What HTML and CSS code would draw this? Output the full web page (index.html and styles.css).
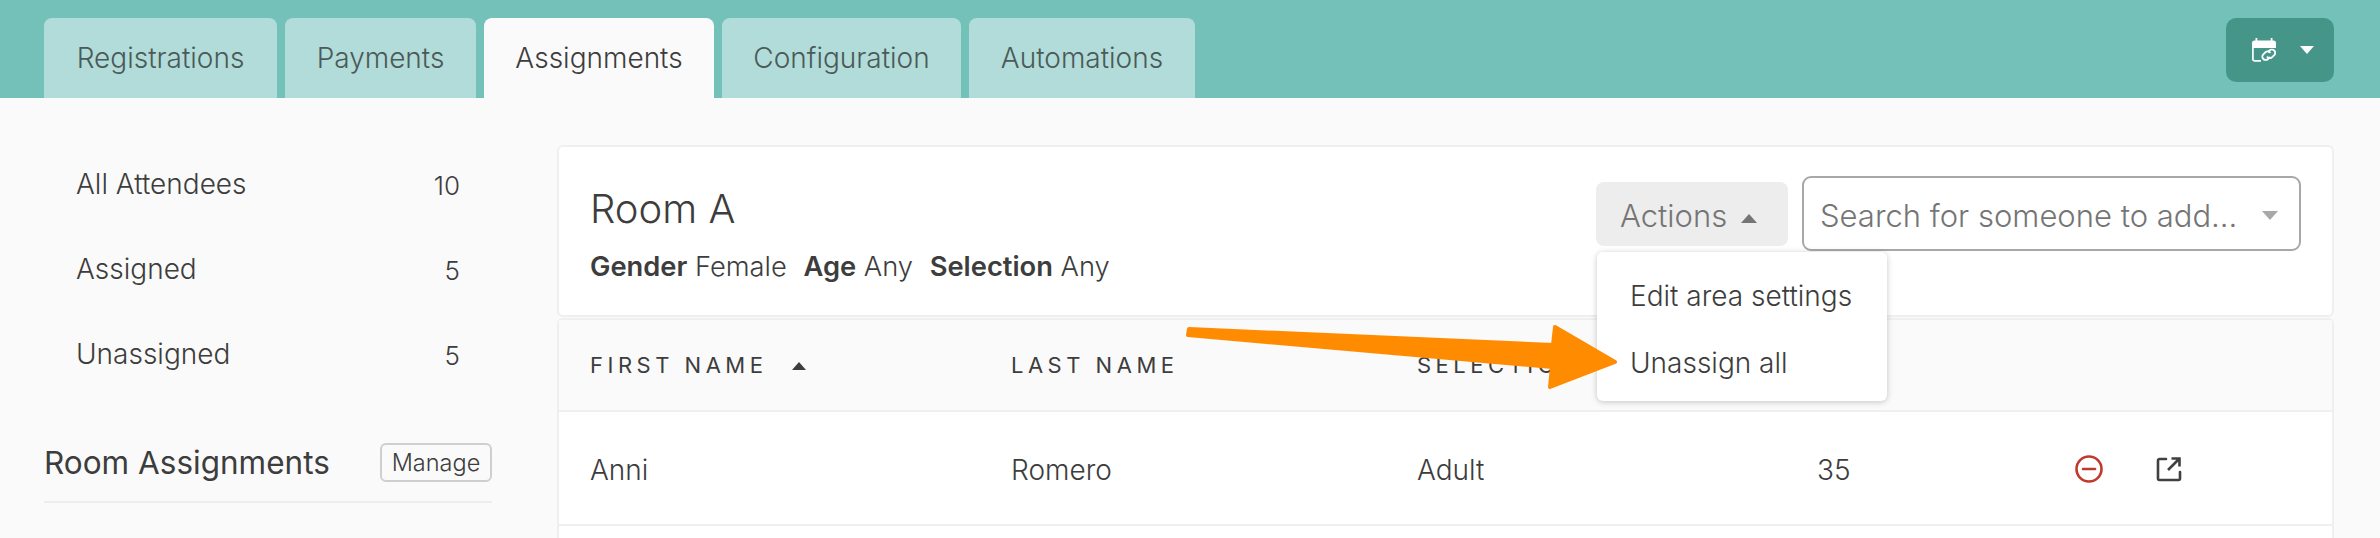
FILE: index.html
```html
<!DOCTYPE html>
<html lang="en">
<head>
<meta charset="utf-8">
<title>Assignments</title>
<link rel="stylesheet" href="styles.css">
</head>
<body>
<header class="topbar">
  <nav class="tabs">
    <a class="tab">Registrations</a>
    <a class="tab">Payments</a>
    <a class="tab tab-active">Assignments</a>
    <a class="tab">Configuration</a>
    <a class="tab">Automations</a>
  </nav>
  <button class="cal-btn">
    <svg class="cal-icon" viewBox="0 0 24 25" width="24" height="25">
      <path fill="#fff" d="M3.500 0h1.800v2.500h13.400V0h1.800v2.500h1A2.500 2.500 0 0 1 24 5v5H0V5a2.500 2.500 0 0 1 2.500-2.500h1z"/>
      <path fill="none" stroke="#fff" stroke-width="1.700" d="M.9 9v12.200c0 .9.7 1.600 1.600 1.600H9"/>
      <g fill="none" stroke="#fff" stroke-width="1.800" stroke-linecap="round">
        <path d="M16.500 13.500l1-1a3.300 3.300 0 0 1 4.700 4.700l-2 2a3.300 3.300 0 0 1-4.700 0"/>
        <path d="M17.500 19.500l-1.500 1.500a3.300 3.300 0 0 1-4.700-4.700l2-2a3.300 3.300 0 0 1 4.700 0"/>
      </g>
    </svg>
    <span class="caret caret-down caret-white"></span>
  </button>
</header>
<div class="content">
  <aside class="sidebar">
    <ul class="nav">
      <li class="nav-row"><span>All Attendees</span><span class="count">10</span></li>
      <li class="nav-row"><span>Assigned</span><span class="count">5</span></li>
      <li class="nav-row"><span>Unassigned</span><span class="count">5</span></li>
    </ul>
    <div class="side-head">
      <h2 class="side-title">Room Assignments</h2>
      <button class="manage">Manage</button>
    </div>
  </aside>
  <main class="panel">
    <section class="card room">
      <div class="room-info">
        <h1 class="room-title">Room A</h1>
        <p class="room-meta"><b>Gender</b> Female <b class="meta-gap">Age</b> Any <b class="meta-gap">Selection</b> Any</p>
      </div>
      <div class="room-tools">
        <div class="actions-wrap">
          <button class="actions">Actions <span class="caret caret-up caret-grey"></span></button>
          <div class="menu">
            <div class="menu-item">Edit area settings</div>
            <div class="menu-item">Unassign all</div>
          </div>
        </div>
        <div class="search">
          <span class="search-text">Search for someone to add...</span>
          <span class="caret caret-down caret-light"></span>
        </div>
      </div>
    </section>
    <section class="card table">
      <div class="grid thead">
        <span>First Name <span class="caret caret-up caret-dark sort"></span></span>
        <span>Last Name</span>
        <span>Selection</span>
        <span>Age</span>
        <span></span>
      </div>
      <div class="grid trow">
        <span>Anni</span>
        <span>Romero</span>
        <span>Adult</span>
        <span>35</span>
        <span class="row-icons">
          <svg viewBox="0 0 28 28" width="28" height="28"><circle cx="14" cy="14" r="12.500" fill="none" stroke="#c0392b" stroke-width="2.600"/><path d="M8 14h12" stroke="#c0392b" stroke-width="2.600" stroke-linecap="round"/></svg>
          <svg viewBox="0 0 26 26" width="26" height="26"><path d="M10 3H3.500A1.500 1.500 0 0 0 2 4.500v18A1.500 1.500 0 0 0 3.500 24h19a1.500 1.500 0 0 0 1.500-1.500V16" fill="none" stroke="#404040" stroke-width="2.600" stroke-linecap="round"/><path d="M12 14L23 3M15.500 2.500h8v8" fill="none" stroke="#404040" stroke-width="2.600"/></svg>
        </span>
      </div>
      <div class="trow-next"></div>
    </section>
  </main>
</div>
<svg class="arrow" viewBox="0 0 2380 538" width="2380" height="538">
  <path class="arrow-shape" d="M1189 329L1553 345L1555 327L1615 362L1550 387L1552 367L1188 335Z"/>
</svg>
</body>
</html>
```
FILE: styles.css
```css
* { box-sizing: border-box; }
html, body { margin: 0; padding: 0; }
body {
  width: 2380px;
  height: 538px;
  overflow: hidden;
  position: relative;
  background: #fafafa;
  color: #3d3d3d;
  font-family: Inter, "Liberation Sans", sans-serif;
  font-weight: 300;
}
.topbar {
  height: 98px;
  background: #74c1ba;
  padding: 18px 46px 0 44px;
  display: flex;
  justify-content: space-between;
  align-items: flex-start;
}
.tabs { display: flex; gap: 8px; }
.tab {
  height: 80px;
  display: flex;
  align-items: center;
  justify-content: center;
  background: #b2dcd9;
  border-radius: 8px 8px 0 0;
  font-size: 28px;
  color: #4b5a58;
}
.tab:nth-child(1) { width: 233px; }
.tab:nth-child(2) { width: 191px; }
.tab:nth-child(3) { width: 230px; }
.tab:nth-child(4) { width: 239px; }
.tab:nth-child(5) { width: 226px; }
.tab-active { background: #fafafa; color: #3d3d3d; }
.cal-btn {
  width: 108px;
  height: 64px;
  border: 0;
  border-radius: 10px;
  background: #469589;
  display: flex;
  align-items: center;
  padding: 0 0 0 26px;
}
.cal-icon { display: block; }
.caret { display: inline-block; width: 0; height: 0; border-left: 7px solid transparent; border-right: 7px solid transparent; }
.caret-down { border-top: 8px solid #fff; }
.caret-up { border-bottom: 8px solid #fff; }
.caret-white { margin-left: 24px; border-left-width: 7.500px; border-right-width: 7.500px; }
.caret-grey { border-bottom-color: #757575; border-left-width: 8.500px; border-right-width: 8.500px; border-bottom-width: 9px; margin-left: 5px; vertical-align: 4px; }
.caret-light { border-top-color: #a8a8a8; border-left-width: 8.500px; border-right-width: 8.500px; border-top-width: 9px; }
.caret-dark { border-bottom-color: #3d3d3d; }
.sort { margin-left: 14px; vertical-align: 3px; }
.content { display: flex; padding: 43px 46px 0 44px; gap: 65px; }
.sidebar { width: 448px; flex: none; }
.nav { list-style: none; margin: 0; padding: 0; }
.nav-row {
  height: 85px;
  padding: 0 32px;
  display: flex;
  justify-content: space-between;
  align-items: center;
  font-size: 28px;
}
.count { font-size: 26px; padding-top: 4px; }
.side-head {
  margin-top: 46px;
  height: 61px;
  padding-bottom: 19px;
  border-bottom: 2px solid #eeeeee;
  display: flex;
  justify-content: space-between;
  align-items: center;
}
.side-title { margin: 0; font-size: 31.500px; font-weight: 400; }
.manage {
  width: 112px;
  height: 39px;
  padding: 0;
  background: #fafafa;
  border: 2px solid #cfcfcf;
  border-radius: 6px;
  font: 300 23.500px Inter, "Liberation Sans", sans-serif;
  color: #3d3d3d;
}
.panel { flex: 1; min-width: 0; padding-top: 4px; }
.card { background: #fff; border: 2px solid #efefef; border-radius: 6px; }
.room {
  height: 172px;
  padding: 0 31px 0 31px;
  display: flex;
  justify-content: space-between;
}
.room-title { margin: 38px 0 0; font-size: 40px; line-height: 48px; font-weight: 300; }
.room-meta { margin: 17px 0 0; font-size: 27.300px; line-height: 34px; }
.room-meta b { font-weight: 600; }
.meta-gap { margin-left: 9px; }
.room-tools { display: flex; gap: 14px; align-items: flex-start; padding-top: 29px; }
.actions-wrap { position: relative; padding-top: 6px; }
.actions {
  width: 192px;
  height: 64px;
  padding: 3px 7px 0 0;
  background: #ededed;
  border: 0;
  border-radius: 8px;
  font: 300 31px Inter, "Liberation Sans", sans-serif;
  color: #757575;
}
.menu {
  position: absolute;
  top: 76px;
  left: 1px;
  width: 290px;
  height: 149px;
  padding: 10px 0;
  background: #fff;
  border-radius: 6px;
  box-shadow: 0 1px 6px rgba(0,0,0,.22);
  z-index: 2;
}
.menu-item { height: 67px; padding-left: 33px; display: flex; align-items: center; font-size: 28px; }
.search {
  width: 499px;
  height: 75px;
  padding: 4px 21px 0 16px;
  background: #fff;
  border: 2.500px solid #a8a8a8;
  border-radius: 9px;
  display: flex;
  justify-content: space-between;
  align-items: center;
  font-size: 31px;
  color: #757575;
}
.table { margin-top: 1px; border-bottom: 0; }
.grid {
  display: grid;
  grid-template-columns: 421px 406px 400px 272px 1fr;
  padding-left: 31px;
  align-items: center;
}
.thead {
  height: 92px;
  background: #fafafa;
  border-bottom: 2px solid #efefef;
  font-size: 22px;
  letter-spacing: 4.500px;
  text-transform: uppercase;
  font-weight: 400;
}
.trow { height: 114px; border-bottom: 2px solid #efefef; font-size: 28px; padding-top: 4px; }
.trow-next { height: 20px; }
.row-icons { display: flex; align-items: center; gap: 53px; margin: -2px 0 0 -14px; }
.arrow { position: absolute; left: 0; top: 0; z-index: 3; pointer-events: none; }
.arrow-shape { fill: #ff8c00; stroke: #ff8c00; stroke-width: 4; stroke-linejoin: round; }
```
